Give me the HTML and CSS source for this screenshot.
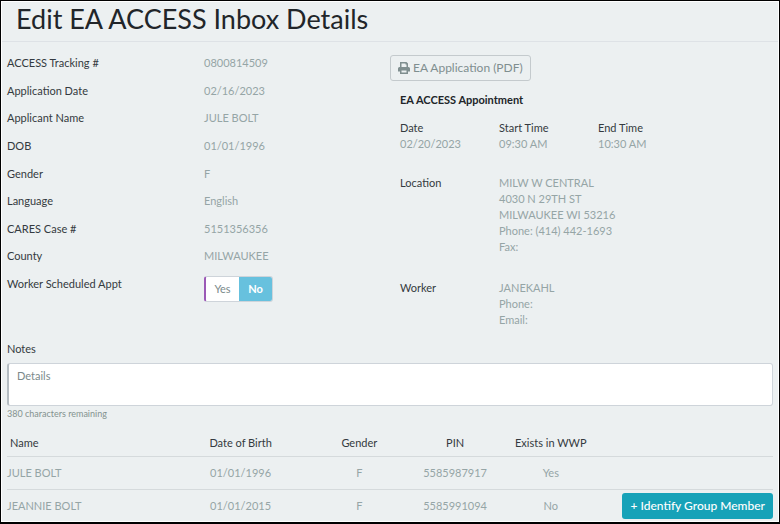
FILE: index.html
```html
<!DOCTYPE html>
<html lang="en">
<head>
<meta charset="utf-8">
<title>Edit EA ACCESS Inbox Details</title>
<link rel="stylesheet" href="styles.css">
</head>
<body>
<main class="page">
  <h1 class="title">Edit EA ACCESS Inbox Details</h1>
  <div class="details">
    <dl class="facts">
      <div class="fact"><dt>ACCESS Tracking #</dt><dd>0800814509</dd></div>
      <div class="fact"><dt>Application Date</dt><dd>02/16/2023</dd></div>
      <div class="fact"><dt>Applicant Name</dt><dd>JULE BOLT</dd></div>
      <div class="fact"><dt>DOB</dt><dd>01/01/1996</dd></div>
      <div class="fact"><dt>Gender</dt><dd>F</dd></div>
      <div class="fact"><dt>Language</dt><dd>English</dd></div>
      <div class="fact"><dt>CARES Case #</dt><dd>5151356356</dd></div>
      <div class="fact"><dt>County</dt><dd>MILWAUKEE</dd></div>
      <div class="fact"><dt id="sched">Worker Scheduled Appt</dt>
        <dd class="toggle" role="group" aria-labelledby="sched"><button type="button" class="choice" aria-pressed="false">Yes</button><button type="button" class="choice chosen" aria-pressed="true">No</button></dd></div>
    </dl>
    <section class="side">
      <button type="button" class="pdf">
        <svg class="printer" viewBox="0 0 12 12" aria-hidden="true"><path fill="currentColor" fill-rule="evenodd" d="M2 0h6.5L10 1.5V5h.5A1.5 1.5 0 0 1 12 6.500V9.500H10V12H2V9.500H0V6.500A1.5 1.5 0 0 1 1.5 5H2zM3.500 1.500V5h5V2.500H7.500V1.500zM3.500 8.500v2h5v-2z"/></svg>
        EA Application (PDF)</button>
      <div class="appointment">
        <h2 class="heading">EA ACCESS Appointment</h2>
        <dl class="times">
          <div><dt>Date</dt><dd>02/20/2023</dd></div>
          <div><dt>Start Time</dt><dd>09:30 AM</dd></div>
          <div><dt>End Time</dt><dd>10:30 AM</dd></div>
        </dl>
        <dl class="contact"><dt>Location</dt><dd>MILW W CENTRAL<br>4030 N 29TH ST<br>MILWAUKEE WI 53216<br>Phone: (414) 442-1693<br>Fax:</dd></dl>
        <dl class="contact"><dt>Worker</dt><dd>JANEKAHL<br>Phone:<br>Email:</dd></dl>
      </div>
    </section>
  </div>
  <div class="notes">
    <label for="notes">Notes</label>
    <textarea id="notes" class="notes-box" placeholder="Details"></textarea>
    <p class="remaining">380 characters remaining</p>
  </div>
  <table class="members">
    <colgroup><col class="c-name"><col class="c-dob"><col class="c-gender"><col class="c-pin"><col class="c-exists"><col></colgroup>
    <thead><tr><th scope="col">Name</th><th scope="col">Date of Birth</th><th scope="col">Gender</th><th scope="col">PIN</th><th scope="col">Exists in WWP</th><td></td></tr></thead>
    <tbody>
      <tr><td>JULE BOLT</td><td>01/01/1996</td><td>F</td><td>5585987917</td><td>Yes</td><td></td></tr>
      <tr><td>JEANNIE BOLT</td><td>01/01/2015</td><td>F</td><td>5585991094</td><td>No</td><td class="action"><button type="button" class="identify">+ Identify Group Member</button></td></tr>
    </tbody>
  </table>
</main>
</body>
</html>
```
FILE: styles.css
```css
* { box-sizing: border-box; }
html { background: #ecf0f1; }
body {
  margin: 0;
  font: 11px/16px Lato, "Liberation Sans", sans-serif;
  color: #343a40;
}
button, textarea { font: inherit; }
dl, dd, p, h1, h2 { margin: 0; }
dd { color: #95a5a6; }

.page {
  min-height: 100vh;
  border: 1px solid #000;
  border-bottom-width: 2px;
  background: #ecf0f1;
  box-shadow: inset 0 0 0 1px #fff;
}
.title {
  margin: 0 1px;
  padding: 1px 14px 5px;
  border-bottom: 1px solid #dee2e6;
  font-size: 27px;
  line-height: 34px;
  font-weight: 400;
  color: #212529;
}
.details {
  display: grid;
  grid-template-columns: 1fr 1fr;
  padding: 13px 6px 0;
}
.facts {
  display: flex;
  flex-direction: column;
  justify-content: space-between;
  padding-bottom: 26px;
}
.fact {
  display: grid;
  grid-template-columns: 197px 1fr;
}
.toggle {
  display: flex;
  width: 69px;
  height: 26px;
  border: 1px solid #ced4da;
  border-left: 2px solid #9b59b6;
  border-radius: 3px;
  overflow: hidden;
}
.choice {
  flex: 1;
  padding: 0;
  border: 0;
  background: #fff;
  color: #7b8a8b;
}
.chosen {
  background: #67c1de;
  color: #fff;
  font-weight: 700;
}
.side { display: flow-root; }
.pdf {
  display: flex;
  align-items: center;
  gap: 3px;
  height: 26px;
  padding: 0 7px;
  border: 1px solid #c4cacd;
  border-radius: 3px;
  background: transparent;
  color: #7f8e8f;
  font-size: 12px;
}
.printer { width: 12px; height: 12px; }
.appointment { padding: 11px 0 0 10px; }
.heading {
  font-size: 11px;
  line-height: 16px;
  font-weight: 700;
  color: #212529;
}
.times {
  display: grid;
  grid-template-columns: 99px 99px 99px;
  margin: 12px 0 23px;
}
.contact {
  display: grid;
  grid-template-columns: 99px 1fr;
}
.contact + .contact { margin-top: 25px; }

.notes {
  display: flex;
  flex-direction: column;
  padding: 13px 6px 0;
}
.notes-box {
  height: 43px;
  margin-top: 6px;
  padding: 4px 8px;
  border: 1px solid #ced4da;
  border-left: 2px solid #b4bcc2;
  border-radius: 3px;
  background: #fff;
  resize: none;
}
.notes-box::placeholder { color: #7b8a8b; opacity: 1; }
.remaining {
  font-size: 9px;
  line-height: 16px;
  color: #84928f;
}
.members {
  width: calc(100% - 12px);
  margin: 8px 6px 0;
  border-collapse: collapse;
  table-layout: fixed;
}
.members th, .members td {
  padding: 0;
  text-align: center;
  font-weight: 400;
}
.members thead { height: 26px; }
.members td { height: 33px; border-top: 1px solid #d5dadc; color: #95a5a6; }
.members thead td { height: auto; border: 0; }
.members th:first-child, .members td:first-child { text-align: left; }
.members th:first-child { padding-left: 3px; }
.c-name { width: 23%; }
.c-dob { width: 15%; }
.c-gender { width: 16%; }
.c-pin { width: 9%; }
.c-exists { width: 16%; }
.members .action { text-align: right; }
.identify {
  height: 26px;
  padding: 0 8px;
  border: 0;
  border-radius: 3px;
  background: #17a2b8;
  color: #fff;
  font-size: 12px;
  font-weight: 500;
}
```
